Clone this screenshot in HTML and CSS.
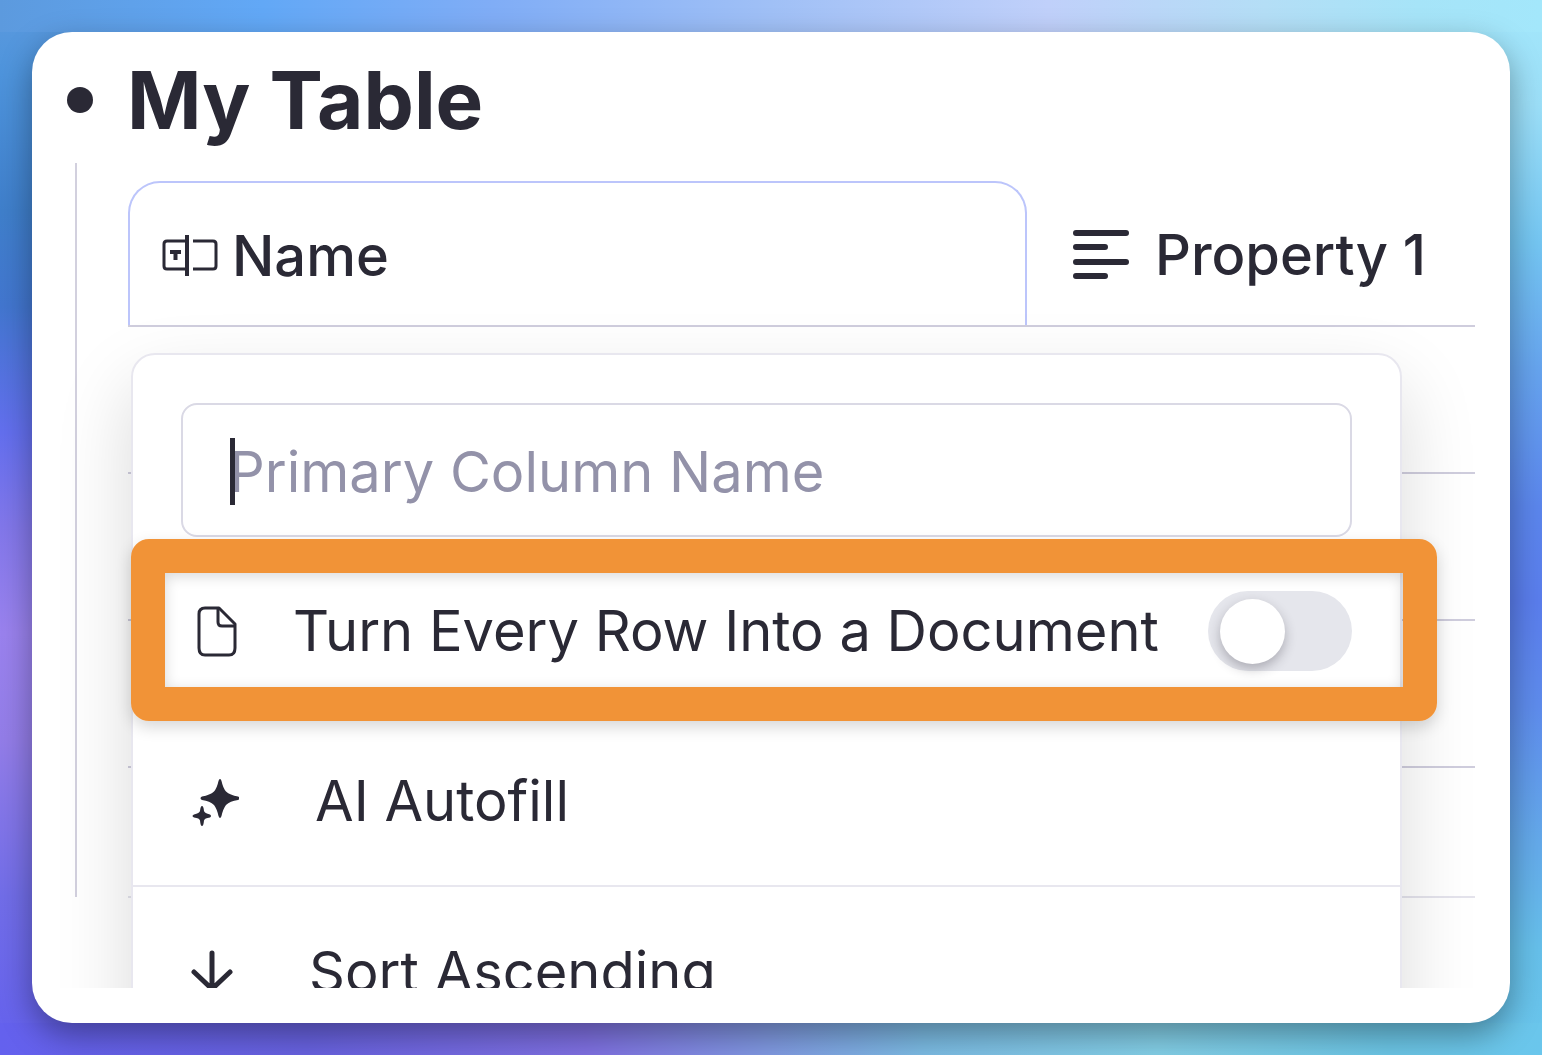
FILE: index.html
```html
<!DOCTYPE html>
<html lang="en">
<head>
    <meta charset="UTF-8">
    <meta name="viewport" content="width=device-width, initial-scale=1.0">
    <title>My Table</title>
    <link rel="stylesheet" href="styles.css">
</head>
<body>
    <main class="card">
        <div class="outline">
            <h1 class="title">My Table</h1>

            <div class="node-children">
                <div class="table-wrap">
                    <table class="data-table">
                        <thead>
                            <tr>
                                <th class="name-column" scope="col">
                                    <div class="column-head name-head">
                                        <svg class="name-icon" viewBox="0 0 56 42" fill="none" stroke="currentColor" stroke-width="3">
                                            <path d="M23 6H5Q2 6 2 9V31Q2 34 5 34H23M31 34H51Q54 34 54 31V9Q54 6 51 6H31"/>
                                            <path d="M25 0V41" stroke-width="4"/>
                                            <path d="M8 17H19M13.500 17V25" stroke-width="4"/>
                                        </svg>
                                        <span>Name</span>
                                    </div>
                                </th>
                                <th scope="col">
                                    <div class="column-head property-head">
                                        <svg class="text-icon" viewBox="0 0 56 52" fill="none" stroke="currentColor" stroke-width="6" stroke-linecap="round">
                                            <path d="M3 4H53M3 18H32M3 33H53M3 47H32"/>
                                        </svg>
                                        <span>Property 1</span>
                                    </div>
                                </th>
                            </tr>
                        </thead>
                        <tbody>
                            <tr><td></td><td></td></tr>
                            <tr><td></td><td></td></tr>
                            <tr><td></td><td></td></tr>
                            <tr class="last-row"><td></td><td></td></tr>
                        </tbody>
                    </table>

                    <div class="menu">
                        <div class="name-field">
                            <input type="text" class="name-input" placeholder="Primary Column Name" aria-label="Primary Column Name">
                            <span class="caret"></span>
                        </div>

                        <div class="menu-item document-item">
                            <svg class="menu-icon" viewBox="0 0 48 52" fill="none" stroke="currentColor" stroke-width="3" stroke-linejoin="round">
                                <path d="M14 3H28L44 19V43Q44 50 38 50H14Q8 50 8 43V9Q8 3 14 3Z"/>
                                <path d="M27 3V17Q27 21 31 21H44"/>
                            </svg>
                            <label for="row-document">Turn Every Row Into a Document</label>
                            <input type="checkbox" id="row-document" class="toggle" role="switch">
                            <div class="highlight"></div>
                        </div>

                        <button type="button" class="menu-item autofill-item">
                            <svg class="menu-icon" viewBox="0 0 48 52" fill="currentColor">
                                <path d="M29 4Q30 4 30.500 6Q32 13 35 16.500Q39 20 47 21.500Q50 23 47 25Q39 26 35 30Q32 34 30.500 41Q29 45 27.500 41Q26 34 23 30Q19 26 11 25Q8 23 11 21.500Q19 20 23 16.500Q26 13 27.500 6Q28 4 29 4Z"/>
                                <path d="M11 31Q12.500 31 13 36Q13.500 38 19 39.500Q21 41 19 42.500Q13.500 43 13 45.500Q12.500 51 11 51Q9.500 51 9 45.500Q8.500 43 3 42.500Q0 41 3 39.500Q8.500 38 9 36Q9.500 31 11 31Z"/>
                            </svg>
                            <span>AI Autofill</span>
                        </button>

                        <button type="button" class="menu-item sort-item">
                            <svg class="menu-icon" viewBox="0 0 48 52" fill="none" stroke="currentColor" stroke-width="5" stroke-linecap="round" stroke-linejoin="round">
                                <path d="M21 7V44M3 26L21 43L39 26"/>
                            </svg>
                            <span>Sort Ascending</span>
                        </button>
                    </div>
                </div>
            </div>
        </div>
    </main>
</body>
</html>
```
FILE: styles.css
```css
* {
    box-sizing: border-box;
}
body {
    margin: 0;
    padding: 32px;
    height: 100vh;
    display: flex;
    font-family: Inter, 'Helvetica Neue', Arial, sans-serif;
    color: #2a2935;
    /* one colour sweep along each edge of the window */
    background:
        linear-gradient(90deg, #5c9ade, #62a8f6 17%, #80adf6 32%, #a0c0f6 50%, #c0d0fa 68%, #b4def6 82%, #a6e4f8 92%, #a3e7fb) top / 100% 32px no-repeat,
        linear-gradient(90deg, #6461ee, #6862e0 20%, #7f70e2 38%, #809ae2 50%, #7cbce4 60%, #84d0e8 75%, #6cc6e6 90%, #6ac6ec) bottom / 100% 32px no-repeat,
        linear-gradient(180deg, #5c9ade, #4e94dc 7%, #3f7fcb 20%, #4276cf 29%, #636fee 41%, #8277ea 50%, #9a82ee 60%, #937de8 70%, #716de8 85%, #6461ee) left / 50% 100% no-repeat,
        linear-gradient(180deg, #a3e7fb, #9cdff8 10%, #74c6f2 23%, #66a4ee 35%, #5b86ec 48%, #5a7dec 57%, #5e8cec 67%, #64aaea 80%, #66c0ea 90%, #6ac6ec) right / 50% 100% no-repeat;
}
.card {
    flex: 1;
    display: flex;
    min-width: 0;
    padding: 16px 35px 35px 0;
    background-color: #ffffff;
    border-radius: 40px;
    box-shadow: 0 12px 32px rgba(0, 0, 0, 0.36);
}
.outline {
    flex: 1;
    min-width: 0;
    overflow: hidden;
    padding: 4px 0 0 35px;
}

/* heading with its bullet */
.title {
    display: flex;
    align-items: center;
    gap: 34px;
    margin: 0;
    font-size: 80px;
    line-height: 96px;
    font-weight: 700;
}
.title::before {
    content: "";
    width: 26px;
    height: 26px;
    border-radius: 50%;
    background-color: #2a2935;
}
.node-children {
    margin: 15px 0 0 8px;
    height: 734px;
    padding: 18px 0 0 51px;
    border-left: 2px solid #d2d0de;
}
.table-wrap {
    position: relative;
}

/* table */
.data-table {
    width: 100%;
    border-collapse: separate;
    border-spacing: 0;
}
.data-table th {
    height: 146px;
    padding: 0;
    border-bottom: 2px solid #cfcddd;
    font-weight: 500;
    text-align: left;
}
.data-table .name-column {
    width: 899px;
}
.data-table td {
    height: 147px;
    padding: 0;
    border-bottom: 2px solid #cfcddd;
}
.data-table .last-row td {
    height: 130px;
    border-bottom-color: #e4e3ec;
}
.column-head {
    display: flex;
    align-items: center;
    height: 144px;
    padding-top: 3px;
    font-size: 56px;
    line-height: 68px;
    white-space: nowrap;
}
.name-head {
    gap: 14px;
    padding-left: 32px;
    border: 2px solid #bcc5fb;
    border-bottom: none;
    border-radius: 32px 32px 0 0;
}
.property-head {
    gap: 26px;
    padding-left: 46px;
}
.name-icon {
    width: 56px;
    height: 42px;
}
.text-icon {
    width: 56px;
    height: 52px;
}

/* column menu */
.menu {
    position: absolute;
    top: 172px;
    left: 3px;
    width: 1271px;
    padding: 48px 0 0;
    background-color: #ffffff;
    border: 2px solid #e8e7ef;
    border-radius: 24px;
    box-shadow: 0 32px 76px rgba(0, 0, 0, 0.15);
}
.name-field {
    position: relative;
    margin: 0 48px 8px;
}
.name-input {
    display: block;
    width: 100%;
    height: 134px;
    padding: 4px 46px 0;
    border: 2px solid #dad9e5;
    border-radius: 16px;
    background-color: #ffffff;
    color: #2a2935;
    font-family: inherit;
    font-size: 56px;
    outline: none;
}
.name-input::placeholder {
    color: #9392a9;
    opacity: 1;
}
.caret {
    position: absolute;
    top: 35px;
    left: 49px;
    width: 5px;
    height: 67px;
    background-color: #2a2935;
}
.menu-item {
    position: relative;
    display: flex;
    align-items: center;
    width: 100%;
    height: 170px;
    padding: 2px 48px 0 58px;
    border: none;
    background: none;
    color: inherit;
    font-family: inherit;
    font-size: 56px;
    line-height: 68px;
    text-align: left;
    white-space: nowrap;
}
.menu-icon {
    width: 48px;
    height: 52px;
    flex: none;
}
.document-item .menu-icon {
    margin-right: 54px;
}
.autofill-item {
    gap: 76px;
}
.sort-item {
    gap: 70px;
    border-top: 2px solid #e8e7ef;
}

/* switch */
.toggle {
    appearance: none;
    display: flex;
    align-items: center;
    flex: none;
    width: 144px;
    height: 80px;
    margin: 0 0 0 auto;
    padding: 0 12px;
    border-radius: 40px;
    background-color: #e5e6ec;
}
.toggle::before {
    content: "";
    width: 65px;
    height: 65px;
    border-radius: 50%;
    background-color: #ffffff;
    box-shadow: 0 5px 12px rgba(42, 41, 53, 0.3);
}
.toggle:checked {
    justify-content: flex-end;
}

/* orange frame round the document row */
.highlight {
    position: absolute;
    top: -6px;
    left: -2px;
    right: -37px;
    height: 182px;
    border: 34px solid #f19337;
    border-radius: 18px;
    box-shadow: 0 6px 16px rgba(0, 0, 0, 0.16), inset 0 3px 14px rgba(0, 0, 0, 0.16);
    pointer-events: none;
}
```
